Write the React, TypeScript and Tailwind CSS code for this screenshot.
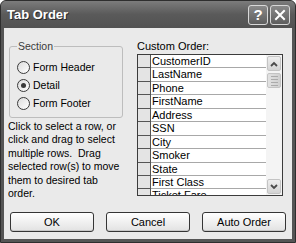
import React from "react";

const rows = [
  "CustomerID",
  "LastName",
  "Phone",
  "FirstName",
  "Address",
  "SSN",
  "City",
  "Smoker",
  "State",
  "First Class",
  "Ticket Fare",
];

function Radio({ label, checked }: { label: string; checked?: boolean }) {
  return (
    <div className="flex h-[18px] items-center">
      <div className="flex h-[13px] w-[13px] items-center justify-center rounded-full border border-[#3a3a3a] bg-gradient-to-br from-[#dcdcdc] to-white">
        {checked && <div className="h-[5px] w-[5px] rounded-full bg-[#3a3a3a]" />}
      </div>
      <span className="ml-[3px] leading-[13px]">{label}</span>
    </div>
  );
}

function Btn({ label }: { label: string }) {
  return (
    <div className="flex h-[20px] w-[84px] items-center justify-center rounded-[3px] border border-[#353535] bg-gradient-to-b from-white to-[#e2e2e2] leading-[13px] shadow-[inset_0_-1px_0_#c8c8c8]">
      {label}
    </div>
  );
}

export default function App() {
  return (
    <div className="flex h-[243px] w-[296px] flex-col overflow-hidden rounded-t-[6px] border border-[#2e2e2e] bg-[#555555] font-['Liberation_Sans',Arial,sans-serif] text-[11px] text-black">
      {/* title bar */}
      <div className="flex h-[27px] shrink-0 items-center bg-gradient-to-b from-[#7c7c7c] via-[#5a5a5a] to-[#525252] pl-[6px] pr-[5px]">
        <span className="text-[13px] font-bold leading-[15px] text-white [text-shadow:1px_1px_0_#2a2a2a]">
          Tab Order
        </span>
        <div className="ml-auto flex gap-[2px]">
          <div className="flex h-[20px] w-[20px] items-center justify-center rounded-[3px] border border-[#d8d8d8] bg-gradient-to-b from-[#8a8a8a] to-[#5e5e5e] text-[15px] font-bold leading-none text-white">
            ?
          </div>
          <div className="flex h-[20px] w-[20px] items-center justify-center rounded-[3px] border border-[#d8d8d8] bg-gradient-to-b from-[#8a8a8a] to-[#5e5e5e]">
            <svg width="12" height="12" viewBox="0 0 12 12">
              <path d="M2 2 L10 10 M10 2 L2 10" stroke="white" strokeWidth="2" strokeLinecap="square" />
            </svg>
          </div>
        </div>
      </div>

      {/* client */}
      <div className="mx-[3px] mb-[3px] flex flex-1 flex-col bg-[#eaeaea]">
        <div className="flex h-[184px] shrink-0 pt-[11px]">
          {/* left column */}
          <div className="w-[133px] pl-[4px] text-[10.5px]">
            <div className="relative ml-[1px] mt-[7px] h-[72px] w-[114px] rounded-[3px] border border-[#bdbdbd] pl-[7px] pt-[11px]">
              <span className="absolute left-[7px] top-[-7px] bg-[#eaeaea] px-[1px] leading-[13px] text-[#3a3a3a]">
                Section
              </span>
              <Radio label="Form Header" />
              <Radio label="Detail" checked />
              <Radio label="Form Footer" />
            </div>
            <p className="mt-[2px] whitespace-pre leading-[13.4px]">
              {"Click to select a row, or\nclick and drag to select\nmultiple rows.  Drag\nselected row(s) to move\nthem to desired tab\norder."}
            </p>
          </div>

          {/* right column */}
          <div className="flex w-[146px] flex-col">
            <div className="h-[15px] leading-[15px]">Custom Order:</div>
            <div className="flex h-[142px] overflow-hidden border border-[#3c3c3c] bg-white">
              <div className="flex-1 overflow-hidden">
                {rows.map((r) => (
                  <div key={r} className="flex h-[13.44px] shrink-0">
                    <div className="w-[13px] shrink-0 border-b border-r border-[#555555] bg-[#e4e4e4]" />
                    <div className="flex-1 overflow-hidden whitespace-nowrap border-b border-[#a8a8a8] pl-[1px] leading-[12.4px]">
                      {r}
                    </div>
                  </div>
                ))}
              </div>
              {/* scrollbar */}
              <div className="flex w-[16px] shrink-0 flex-col bg-[#f4f4f4] px-[1px] py-[1px]">
                <div className="flex h-[15px] items-center justify-center rounded-[2px] border border-[#c4c4c4] bg-gradient-to-b from-[#eeeeee] to-[#d4d4d4]">
                  <svg width="8" height="6" viewBox="0 0 8 6">
                    <path d="M1 5 L4 2 L7 5" stroke="#4a4a4a" strokeWidth="1.8" fill="none" />
                  </svg>
                </div>
                <div className="mt-[2px] flex h-[15px] flex-col items-center justify-center gap-[2px] rounded-[2px] border border-[#c4c4c4] bg-gradient-to-r from-[#e2e2e2] to-[#d0d0d0]">
                  <div className="h-px w-[7px] bg-[#ababab]" />
                  <div className="h-px w-[7px] bg-[#ababab]" />
                  <div className="h-px w-[7px] bg-[#ababab]" />
                  <div className="h-px w-[7px] bg-[#ababab]" />
                </div>
                <div className="flex-1" />
                <div className="flex h-[15px] items-center justify-center rounded-[2px] border border-[#c4c4c4] bg-gradient-to-b from-[#eeeeee] to-[#d4d4d4]">
                  <svg width="8" height="6" viewBox="0 0 8 6">
                    <path d="M1 1 L4 4 L7 1" stroke="#4a4a4a" strokeWidth="1.8" fill="none" />
                  </svg>
                </div>
              </div>
            </div>
          </div>
        </div>

        {/* buttons */}
        <div className="flex gap-[12px] pl-[6px]">
          <Btn label="OK" />
          <Btn label="Cancel" />
          <Btn label="Auto Order" />
        </div>
      </div>
    </div>
  );
}
